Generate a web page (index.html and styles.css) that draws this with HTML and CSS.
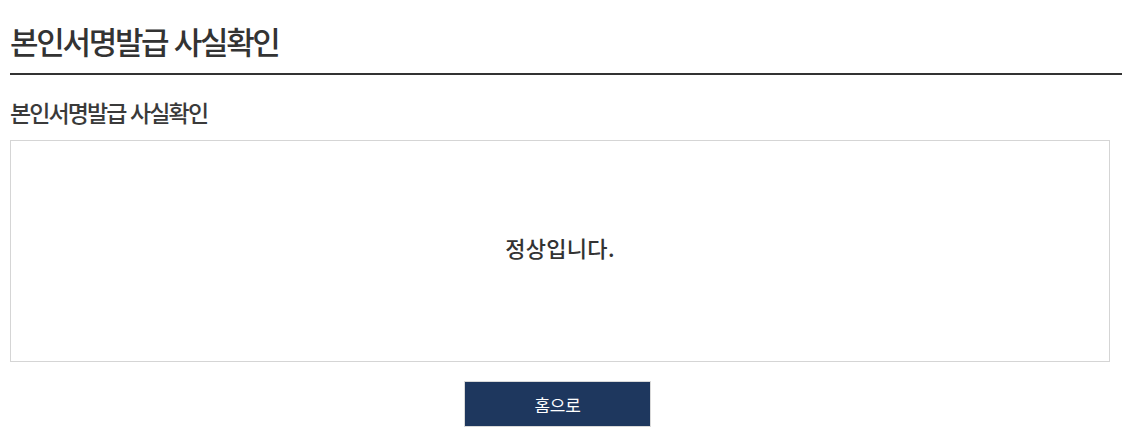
FILE: index.html
```html
<!DOCTYPE html>
<html lang="ko">
<head>
<meta charset="utf-8">
<link rel="stylesheet" href="styles.css">
</head>
<body>
<div class="page">
  <h1 class="title">본인서명발급 사실확인</h1>
  <h2 class="subtitle">본인서명발급 사실확인</h2>
  <div class="result-box">
    <p class="result-text">정상입니다.</p>
  </div>
  <div class="actions">
    <a class="btn-home" href="#">홈으로</a>
  </div>
</div>
</body>
</html>
```
FILE: styles.css
```css
html, body {
  margin: 0;
  padding: 0;
  background: #fff;
}
body {
  font-family: "Noto Sans CJK KR", "Noto Sans", sans-serif;
  color: #333;
}
.page {
  padding: 0 0 0 10px;
}
.title {
  margin: 0;
  padding-top: 20px;
  height: 53px;
  font-size: 31px;
  font-weight: 500;
  line-height: 42px;
  letter-spacing: -2.3px;
  color: #333;
  border-bottom: 2px solid #333;
  box-sizing: content-box;
}
.subtitle {
  margin: 0;
  padding-top: 22px;
  height: 43px;
  font-size: 23px;
  font-weight: 500;
  line-height: 30px;
  letter-spacing: -1.9px;
  color: #3a3a3a;
}
.result-box {
  width: 1098px;
  height: 220px;
  border: 1px solid #d5d5d5;
  display: flex;
  align-items: center;
  justify-content: center;
}
.result-text {
  margin: 0;
  padding-bottom: 8px;
  font-size: 22px;
  font-weight: 500;
  letter-spacing: 0.3px;
  color: #333;
}
.actions {
  width: 1100px;
  display: flex;
  justify-content: center;
  padding-top: 19px;
}
.btn-home {
  display: flex;
  align-items: center;
  justify-content: center;
  box-sizing: border-box;
  width: 187px;
  height: 46px;
  margin-right: 5px;
  background: #1e375e;
  border: 1px solid #d9d9d9;
  color: #fff;
  font-size: 17px;
  letter-spacing: -0.3px;
  text-decoration: none;
}
```
